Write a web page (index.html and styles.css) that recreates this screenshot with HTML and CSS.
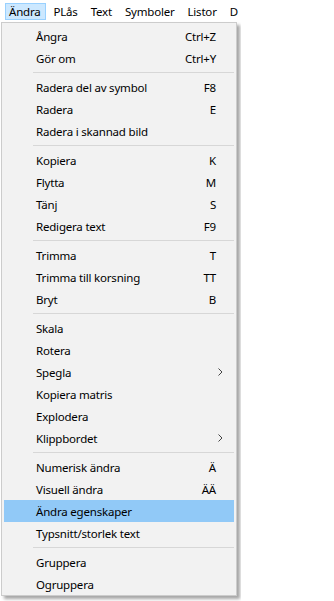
FILE: index.html
```html
<!DOCTYPE html>
<html lang="sv">
<head>
  <meta charset="UTF-8" />
  <title>Ändra</title>
  <link rel="stylesheet" href="styles.css">
</head>
<body>
  <div class="app">
    <nav class="menubar">
      <span class="bar-item active">Ändra</span>
      <span class="bar-item">PLås</span>
      <span class="bar-item">Text</span>
      <span class="bar-item">Symboler</span>
      <span class="bar-item">Listor</span>
      <span class="bar-item">D</span>
    </nav>

    <div class="dropdown">
      <div class="item"><span>Ångra</span><span class="key">Ctrl+Z</span></div>
      <div class="item"><span>Gör om</span><span class="key">Ctrl+Y</span></div>
      <div class="sep"></div>
      <div class="item"><span>Radera del av symbol</span><span class="key">F8</span></div>
      <div class="item"><span>Radera</span><span class="key">E</span></div>
      <div class="item"><span>Radera i skannad bild</span></div>
      <div class="sep"></div>
      <div class="item"><span>Kopiera</span><span class="key">K</span></div>
      <div class="item"><span>Flytta</span><span class="key">M</span></div>
      <div class="item"><span>Tänj</span><span class="key">S</span></div>
      <div class="item"><span>Redigera text</span><span class="key">F9</span></div>
      <div class="sep"></div>
      <div class="item"><span>Trimma</span><span class="key">T</span></div>
      <div class="item"><span>Trimma till korsning</span><span class="key">TT</span></div>
      <div class="item"><span>Bryt</span><span class="key">B</span></div>
      <div class="sep"></div>
      <div class="item"><span>Skala</span></div>
      <div class="item"><span>Rotera</span></div>
      <div class="item sub"><span>Spegla</span>
        <svg class="arrow" width="5" height="8" viewBox="0 0 5 8"><path d="M0.5 0.5 L4 4 L0.5 7.5" fill="none" stroke="#444" stroke-width="1"/></svg>
      </div>
      <div class="item"><span>Kopiera matris</span></div>
      <div class="item"><span>Explodera</span></div>
      <div class="item sub"><span>Klippbordet</span>
        <svg class="arrow" width="5" height="8" viewBox="0 0 5 8"><path d="M0.5 0.5 L4 4 L0.5 7.5" fill="none" stroke="#444" stroke-width="1"/></svg>
      </div>
      <div class="sep"></div>
      <div class="item"><span>Numerisk ändra</span><span class="key">Ä</span></div>
      <div class="item"><span>Visuell ändra</span><span class="key">ÄÄ</span></div>
      <div class="item selected"><span>Ändra egenskaper</span></div>
      <div class="item"><span>Typsnitt/storlek text</span></div>
      <div class="sep"></div>
      <div class="item"><span>Gruppera</span></div>
      <div class="item"><span>Ogruppera</span></div>
    </div>
  </div>
</body>
</html>
```

FILE: styles.css
```css
body {
  margin: 0;
  background: #ffffff;
  font-family: 'Noto Sans', 'Open Sans', sans-serif;
  font-size: 11.5px;
  letter-spacing: -0.2px;
  color: #000;
}

.app {
  width: 241px;
  overflow: hidden;
  height: 601px;
}

.menubar {
  display: flex;
  height: 22px;
  align-items: center;
  padding-left: 5px;
  white-space: nowrap;
  background: #fff;
}
.bar-item {
  padding: 0 4px 0 3px;
  margin-right: 4px;
  height: 17px;
  line-height: 16px;
  border: 1px solid transparent;
  box-sizing: border-box;
}
.bar-item.active {
  background: #cce8ff;
  border-color: #99d1ff;
}

.dropdown {
  width: 234px;
  background: #f2f2f2;
  border: 1px solid #cccccc;
  padding: 2px 0 0 0;
  margin-left: 1px;
  box-shadow: 3px 3px 3px rgba(0, 0, 0, 0.35);
}

.item {
  display: flex;
  justify-content: space-between;
  align-items: center;
  height: 22px;
  margin: 0 2px;
  padding: 0 18px 0 32px;
}
.item.selected {
  background: #91c9f7;
}
.item.sub {
  padding-right: 11px;
}
.arrow {
  display: block;
}

.sep {
  height: 1px;
  background: #d7d7d7;
  margin: 3px 2px 3px 31px;
}
```
